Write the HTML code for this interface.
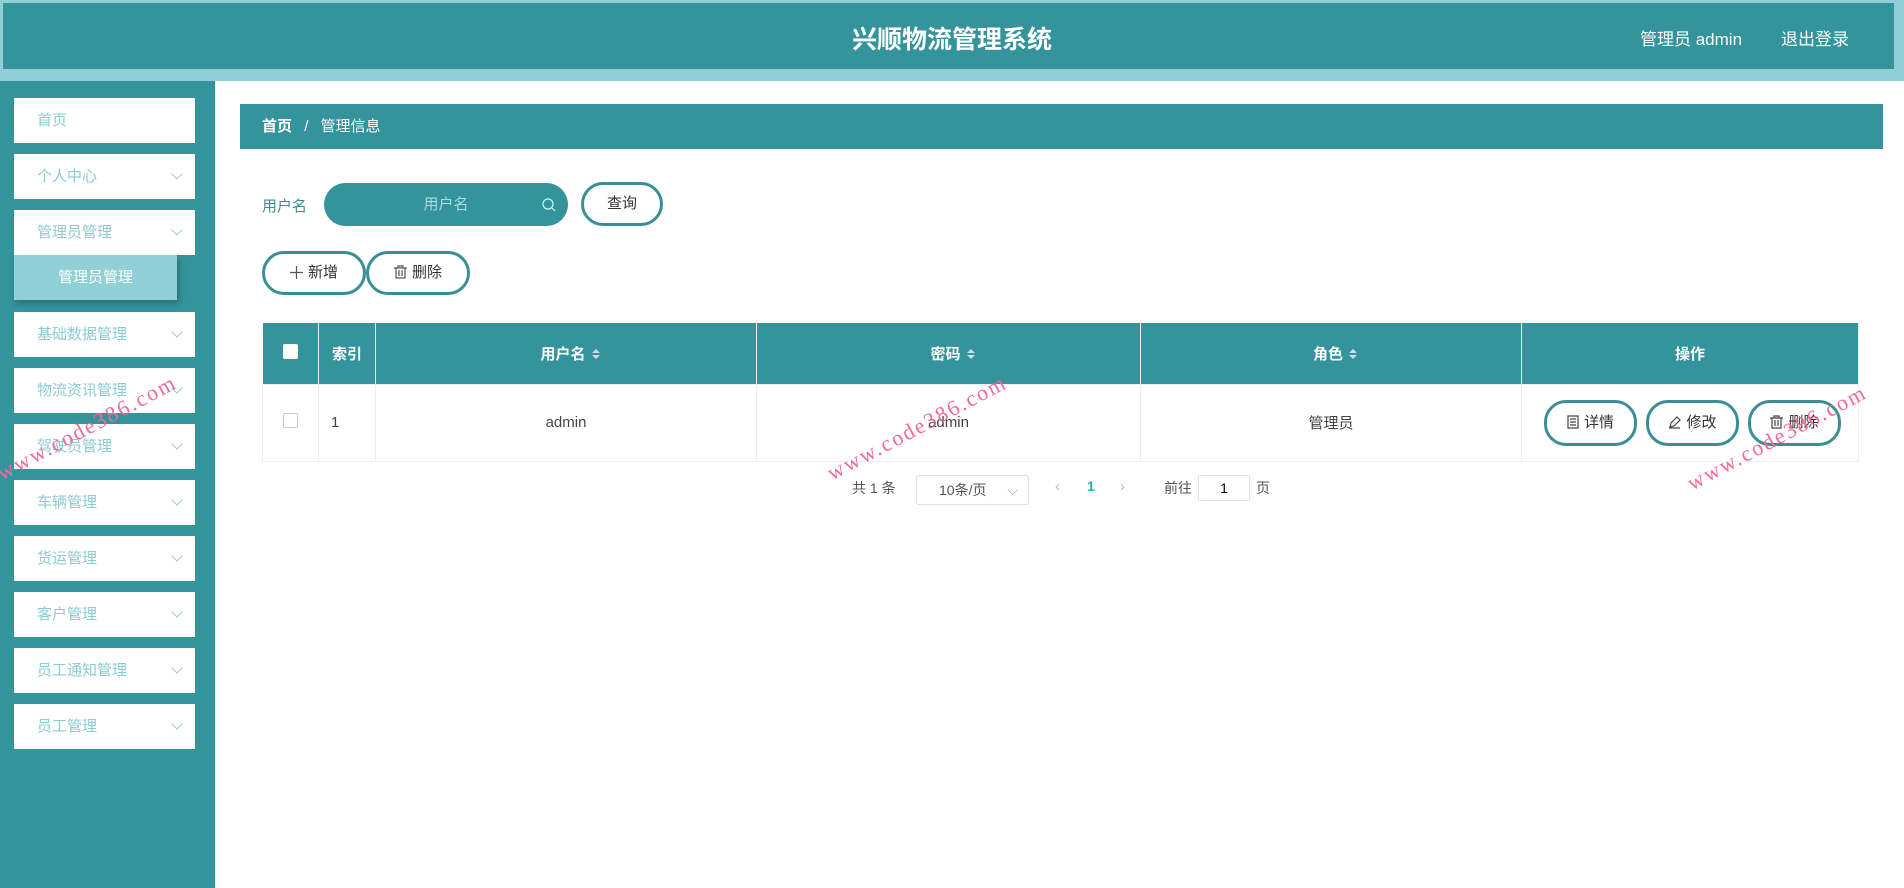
<!DOCTYPE html>
<html><head><meta charset="utf-8"><style>
*{margin:0;padding:0;box-sizing:border-box}
body{width:1904px;height:888px;overflow:hidden;background:#fff;font-family:"Liberation Sans","Noto Sans CJK SC",sans-serif;position:relative;font-size:15px}
.hdr{position:absolute;left:0;top:0;width:1904px;height:81px;background:#8fcfd6}
.hdr .in{position:absolute;left:3px;top:3px;right:10px;height:66px;background:#34939b}
.title{position:absolute;left:0;right:0;top:20px;text-align:center;color:#fff;font-size:25px;font-weight:bold}
.ur{position:absolute;top:25px;color:#fff;font-size:17px}
.side{position:absolute;left:0;top:81px;width:215px;height:807px;background:#34939b}
.mi{position:absolute;left:14px;width:181px;height:45px;background:#fff;color:#8ccbd2;font-size:15px;line-height:45px;padding-left:23px}
.mi i{position:absolute;right:14px;top:16px;width:8px;height:8px;border-right:1px solid #9cc;border-bottom:1px solid #9cc;transform:rotate(45deg)}
.sub{position:absolute;left:14px;top:255px;width:163px;height:45px;background:#91d0d7;color:#fff;line-height:45px;text-align:center;box-shadow:2px 3px 6px rgba(0,0,0,.25)}
.bc{position:absolute;left:240px;top:104px;width:1643px;height:45px;background:#34939b;color:#fff;line-height:45px;padding-left:22px;font-size:15px}
.lbl{position:absolute;font-size:15px;color:#3a8f96}
.inp{position:absolute;left:324px;top:183px;width:244px;height:43px;border-radius:22px;background:#34939b;color:#a8dde2;text-align:center;line-height:43px;font-size:15px}
.btn{position:absolute;height:44px;border:3px solid #3a8f96;border-radius:22px;background:#fff;color:#333;text-align:center;line-height:38px;font-size:15px}
.btn svg{vertical-align:-2px;margin-right:5px}
table{position:absolute;left:262px;top:323px;width:1597px;border-collapse:collapse;font-size:15px}
th{background:#34939b;color:#fff;height:61px;border-right:1px solid #e8f0f0;font-weight:bold}
td{height:77px;border:1px solid #ebeef5;text-align:center;color:#444}
.wm{position:absolute;color:#f06b9d;font-family:"Liberation Serif",serif;font-size:22px;transform:rotate(-28deg);transform-origin:left bottom;letter-spacing:2px}
.sa{display:inline-block;width:0;height:0;vertical-align:middle;margin-left:6px;position:relative;top:-4px}
.sa:before{content:"";position:absolute;border:4px solid transparent;border-bottom-color:#cde;top:-6px;left:0}
.sa:after{content:"";position:absolute;border:4px solid transparent;border-top-color:#cde;top:4px;left:0}
</style></head><body>
<div class="hdr"><div class="in"></div>
<div class="title">兴顺物流管理系统</div>
<div class="ur" style="left:1640px">管理员 admin</div>
<div class="ur" style="left:1781px">退出登录</div></div>
<div class="side">
<div class="mi" style="top:17px">首页</div>
<div class="mi" style="top:73px">个人中心<i></i></div>
<div class="mi" style="top:129px">管理员管理<i></i></div>
<div class="mi" style="top:231px">基础数据管理<i></i></div>
<div class="mi" style="top:287px">物流资讯管理<i></i></div>
<div class="mi" style="top:343px">驾驶员管理<i></i></div>
<div class="mi" style="top:399px">车辆管理<i></i></div>
<div class="mi" style="top:455px">货运管理<i></i></div>
<div class="mi" style="top:511px">客户管理<i></i></div>
<div class="mi" style="top:567px">员工通知管理<i></i></div>
<div class="mi" style="top:623px">员工管理<i></i></div>
</div>
<div class="sub">管理员管理</div>
<div class="bc"><b>首页</b> <span style="margin:0 8px">/</span> 管理信息</div>
<div class="lbl" style="left:262px;top:195px">用户名</div>
<div class="inp">用户名<svg style="position:absolute;right:12px;top:15px" width="14" height="14" viewBox="0 0 14 14" fill="none" stroke="#cfe" stroke-width="1.2"><circle cx="6" cy="6" r="5"/><path d="M10 10l3 3"/></svg></div>
<div class="btn" style="left:581px;top:182px;width:82px">查询</div>
<div class="btn" style="left:262px;top:251px;width:104px"><svg width="13" height="13" viewBox="0 0 13 13" stroke="#555" stroke-width="1.2"><path d="M6.5 0v13M0 6.5h13"/></svg>新增</div>
<div class="btn" style="left:366px;top:251px;width:104px"><svg width="13" height="14" viewBox="0 0 13 14" fill="none" stroke="#555" stroke-width="1.2"><path d="M0 3h13M4 3V1h5v2M2 3v10h9V3M5 5v6M8 5v6"/></svg>删除</div>
<table><tr>
<th style="width:56px"><span style="display:inline-block;width:15px;height:15px;background:#fff;border-radius:2px"></span></th>
<th style="width:57px">索引</th><th style="width:381px">用户名<span class="sa"></span></th><th style="width:384px">密码<span class="sa"></span></th><th style="width:381px">角色<span class="sa"></span></th><th>操作</th></tr>
<tr><td><span style="display:inline-block;width:15px;height:15px;border:1px solid #ccc;border-radius:2px"></span></td><td style="text-align:left;padding-left:12px">1</td><td>admin</td><td>admin</td><td>管理员</td>
<td style="position:relative"><div class="btn" style="position:absolute;left:22px;top:15px;width:93px;height:46px;line-height:40px"><svg width="12" height="14" viewBox="0 0 12 14" fill="none" stroke="#444" stroke-width="1.2"><path d="M1 1h10v12H1zM3 4h6M3 7h6M3 10h6"/></svg>详情</div><div class="btn" style="position:absolute;left:124px;top:15px;width:93px;height:46px;line-height:40px"><svg width="13" height="14" viewBox="0 0 13 14" fill="none" stroke="#444" stroke-width="1.2"><path d="M2 12l1-4 6-6 3 3-6 6zM1 13h11"/></svg>修改</div><div class="btn" style="position:absolute;left:226px;top:15px;width:93px;height:46px;line-height:40px"><svg width="13" height="14" viewBox="0 0 13 14" fill="none" stroke="#444" stroke-width="1.2"><path d="M0 3h13M4 3V1h5v2M2 3v10h9V3M5 5v6M8 5v6"/></svg>删除</div></td></tr></table>
<div style="position:absolute;top:478px;left:852px;font-size:14px;color:#555">共 1 条</div>
<div style="position:absolute;top:475px;left:916px;width:113px;height:30px;border:1px solid #dcdfe6;border-radius:3px;font-size:14px;line-height:28px;padding-left:22px;color:#555">10条/页 <span style="position:absolute;right:10px;color:#aaa">⌵</span></div>
<div style="position:absolute;top:478px;left:1055px;color:#bbb">‹</div>
<div style="position:absolute;top:478px;left:1087px;color:#2bb09a;font-weight:bold;font-size:14px">1</div>
<div style="position:absolute;top:478px;left:1120px;color:#bbb">›</div>
<div style="position:absolute;top:478px;left:1164px;font-size:14px;color:#555">前往</div>
<div style="position:absolute;top:475px;left:1198px;width:52px;height:26px;border:1px solid #dcdfe6;border-radius:3px;text-align:center;line-height:24px;font-size:14px">1</div>
<div style="position:absolute;top:478px;left:1256px;font-size:14px;color:#555">页</div>
<div class="wm" style="left:5px;top:460px">www.code386.com</div>
<div class="wm" style="left:835px;top:460px">www.code386.com</div>
<div class="wm" style="left:1695px;top:470px">www.code386.com</div>
</body></html>
